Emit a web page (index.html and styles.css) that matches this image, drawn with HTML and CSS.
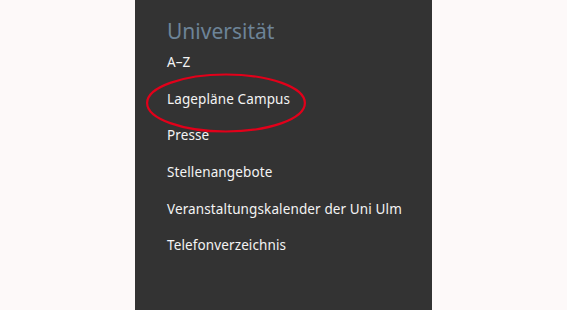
FILE: index.html
```html
<!DOCTYPE html>
<html lang="de">
<head>
  <meta charset="UTF-8">
  <title>Universität</title>
  <link rel="stylesheet" href="styles.css">
</head>
<body>
  <div class="panel">
    <h2>Universität</h2>
    <ul class="links">
      <li><a href="#">A–Z</a></li>
      <li class="marked">
        <a href="#">Lagepläne Campus</a>
        <svg class="ring" width="164" height="64" viewBox="0 0 164 64">
          <ellipse cx="82" cy="32" rx="78.9" ry="28.5" fill="none" stroke="#e2001a" stroke-width="2.2"/>
        </svg>
      </li>
      <li><a href="#">Presse</a></li>
      <li><a href="#">Stellenangebote</a></li>
      <li><a href="#">Veranstaltungskalender der Uni Ulm</a></li>
      <li><a href="#">Telefonverzeichnis</a></li>
    </ul>
  </div>
</body>
</html>
```

FILE: styles.css
```css
html, body { margin: 0; height: 100%; }
body { background: #fdf9f9; font-family: "Noto Sans", "Open Sans", sans-serif; }
.panel { width: 265px; height: 100%; margin: 0 auto; background: #333333; padding: 0 0 0 32px; }
.panel h2 { margin: 0; padding-top: 17px; font-size: 21px; font-weight: 400; color: #6d8498; line-height: 28px; }
.links { list-style: none; margin: 7px 0 0; padding: 0; }
.links li { font-size: 13.5px; line-height: 20px; margin-bottom: 16.7px; letter-spacing: 0.12px; }
.links a { color: #f4f4f4; text-decoration: none; }
.marked { position: relative; }
.ring { position: absolute; left: -23px; top: -18px; }
```
